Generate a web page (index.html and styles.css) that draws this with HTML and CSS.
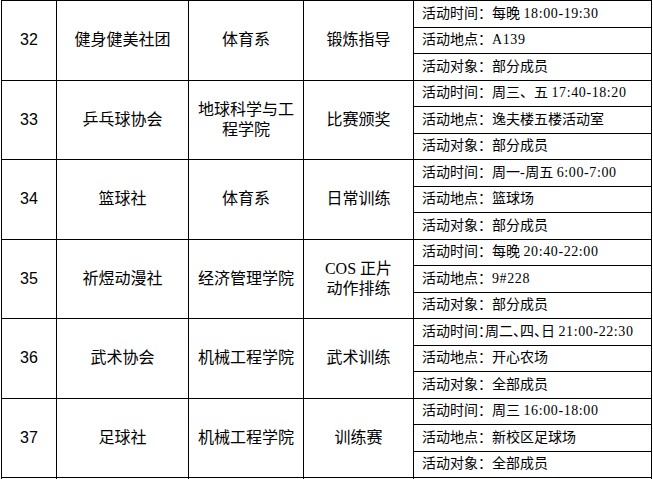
FILE: index.html
```html
<!DOCTYPE html>
<html lang="zh-CN">
<head>
<meta charset="utf-8">
<title>社团活动</title>
<link rel="stylesheet" href="styles.css">
</head>
<body>
<table class="clubs">
  <colgroup>
    <col class="c-no">
    <col class="c-name">
    <col class="c-dept">
    <col class="c-type">
    <col class="c-info">
  </colgroup>
  <tbody>
    <tr>
      <td class="no" rowspan="3">32</td>
      <td class="main" rowspan="3">健身健美社团</td>
      <td class="main" rowspan="3">体育系</td>
      <td class="main" rowspan="3">锻炼指导</td>
      <td class="info">活动时间：每晚 <span class="lat">18:00-19:30</span></td>
    </tr>
    <tr><td class="info">活动地点：<span class="lat">A139</span></td></tr>
    <tr><td class="info">活动对象：部分成员</td></tr>

    <tr>
      <td class="no" rowspan="3">33</td>
      <td class="main" rowspan="3">乒乓球协会</td>
      <td class="main" rowspan="3">地球科学与工<br>程学院</td>
      <td class="main" rowspan="3">比赛颁奖</td>
      <td class="info">活动时间：周三、五 <span class="lat">17:40-18:20</span></td>
    </tr>
    <tr><td class="info">活动地点：逸夫楼五楼活动室</td></tr>
    <tr><td class="info">活动对象：部分成员</td></tr>

    <tr>
      <td class="no" rowspan="3">34</td>
      <td class="main" rowspan="3">篮球社</td>
      <td class="main" rowspan="3">体育系</td>
      <td class="main" rowspan="3">日常训练</td>
      <td class="info">活动时间：周一<span class="lat">-</span>周五 <span class="lat">6:00-7:00</span></td>
    </tr>
    <tr><td class="info">活动地点：篮球场</td></tr>
    <tr><td class="info">活动对象：部分成员</td></tr>

    <tr>
      <td class="no" rowspan="3">35</td>
      <td class="main" rowspan="3">祈煜动漫社</td>
      <td class="main" rowspan="3">经济管理学院</td>
      <td class="main" rowspan="3">COS 正片<br>动作排练</td>
      <td class="info">活动时间：每晚 <span class="lat">20:40-22:00</span></td>
    </tr>
    <tr><td class="info">活动地点：<span class="lat">9#228</span></td></tr>
    <tr><td class="info">活动对象：部分成员</td></tr>

    <tr>
      <td class="no" rowspan="3">36</td>
      <td class="main" rowspan="3">武术协会</td>
      <td class="main" rowspan="3">机械工程学院</td>
      <td class="main" rowspan="3">武术训练</td>
      <td class="info tight">活动时间：周二、四、日 <span class="lat">21:00-22:30</span></td>
    </tr>
    <tr><td class="info">活动地点：开心农场</td></tr>
    <tr><td class="info">活动对象：全部成员</td></tr>

    <tr>
      <td class="no" rowspan="3">37</td>
      <td class="main" rowspan="3">足球社</td>
      <td class="main" rowspan="3">机械工程学院</td>
      <td class="main" rowspan="3">训练赛</td>
      <td class="info">活动时间：周三 <span class="lat">16:00-18:00</span></td>
    </tr>
    <tr><td class="info">活动地点：新校区足球场</td></tr>
    <tr><td class="info">活动对象：全部成员</td></tr>

    <tr class="next">
      <td></td><td></td><td></td><td></td><td></td>
    </tr>
  </tbody>
</table>
</body>
</html>
```
FILE: styles.css
```css
html, body {
  margin: 0;
  padding: 0;
  background: #ffffff;
}

body {
  overflow: hidden;
  height: 479px;
}

.clubs {
  margin-left: 1px;
  width: 651px;
  table-layout: fixed;
  border-collapse: collapse;
  color: #000000;
  font-family: "Liberation Serif", "Noto Sans CJK SC", serif;
}

.c-no { width: 55px; }
.c-name { width: 132px; }
.c-dept { width: 115px; }
.c-type { width: 110px; }
.c-info { width: 238px; }

.clubs tr {
  height: 26.5px;
}

.clubs td {
  border: 1px solid #000000;
  padding: 0;
  vertical-align: middle;
}

.clubs .no {
  text-align: center;
  font-family: "Liberation Sans", Arial, sans-serif;
  font-size: 16px;
}

.clubs .main {
  text-align: center;
  font-size: 16px;
  line-height: 20px;
  padding: 0 4px;
}

.clubs .info {
  font-size: 14px;
  line-height: 18px;
  padding: 0 4px 0 8px;
  white-space: nowrap;
}

.clubs .tight {
  font-feature-settings: "halt" 1;
}

.lat {
  letter-spacing: 0.6px;
}

.clubs .next {
  height: 8px;
}
```
